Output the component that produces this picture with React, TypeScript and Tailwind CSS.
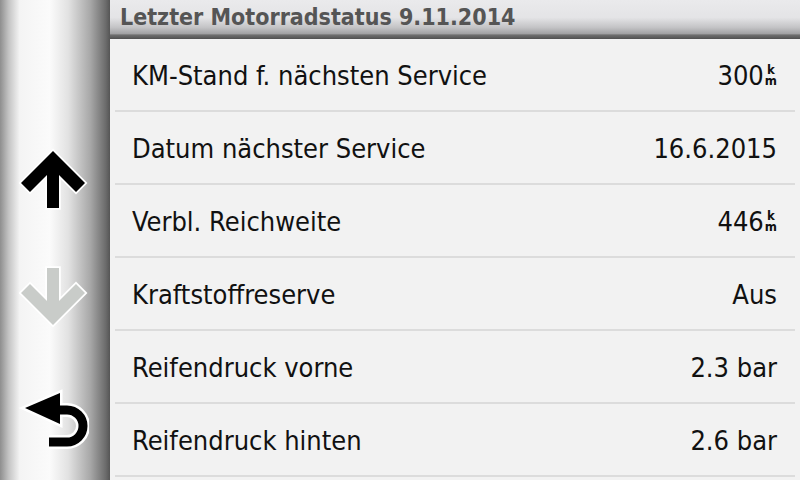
import React from "react";

const rows: { label: string; value: string; unit?: boolean }[] = [
  { label: "KM-Stand f. nächsten Service", value: "300", unit: true },
  { label: "Datum nächster Service", value: "16.6.2015" },
  { label: "Verbl. Reichweite", value: "446", unit: true },
  { label: "Kraftstoffreserve", value: "Aus" },
  { label: "Reifendruck vorne", value: "2.3 bar" },
  { label: "Reifendruck hinten", value: "2.6 bar" },
];

const font = { fontFamily: "'DejaVu Sans Condensed', 'DejaVu Sans', sans-serif" };

function Arrow({ color, down }: { color: string; down?: boolean }) {
  return (
    <svg width="72" height="66" viewBox="-4 -4 72 66" className={down ? "rotate-180" : ""}>
      <polygon
        points="32,0 64,32 55,41 38,24 38,57 26,57 26,24 9,41 0,32"
        fill={color}
        stroke="#ffffff"
        strokeWidth="3.5"
        strokeLinejoin="miter"
        paintOrder="stroke"
      />
    </svg>
  );
}

function BackArrow() {
  return (
    <svg width="72" height="66" viewBox="20 385 72 66">
      <g stroke="#ffffff" strokeWidth="14" fill="none" strokeLinejoin="miter">
        <path d="M58 409 H70 A16 16 0 0 1 70 441 H52" />
        <polygon points="28,407 63,392 63,423" fill="#ffffff" strokeWidth="5" />
      </g>
      <path d="M58 409 H70 A16 16 0 0 1 70 441 H52" stroke="#000" strokeWidth="9" fill="none" />
      <polygon points="28,407 63,392 63,423" fill="#000" />
    </svg>
  );
}

function KmUnit() {
  return (
    <span className="ml-[1px] inline-flex -translate-y-[2px] flex-col items-center text-[13px] font-bold leading-[11px]">
      <span>k</span>
      <span>m</span>
    </span>
  );
}

export default function App() {
  return (
    <div className="flex h-[480px] w-[800px] overflow-hidden bg-[#f2f2f2]" style={font}>
      <div className="flex w-[110px] shrink-0 flex-col items-center bg-[linear-gradient(to_right,#8e8e8e_0%,#c4c4c4_8%,#f4f4f4_18%,#fbfbfb_45%,#e2e2e2_62%,#a8a8a8_82%,#6c6c6c_96%,#555555_100%)]">
        <div className="mt-[147px] pr-[4px]">
          <Arrow color="#000000" />
        </div>
        <div className="mt-[50px] pr-[4px]">
          <Arrow color="#c9ccc9" down />
        </div>
        <div className="mt-[57px] pr-[4px]">
          <BackArrow />
        </div>
      </div>
      <div className="flex min-w-0 flex-1 flex-col">
        <div className="flex h-[39px] shrink-0 items-center bg-[linear-gradient(to_bottom,#eaeaec_0%,#e4e4e6_45%,#c4c4c6_70%,#a2a2a4_86%,#6e6e6e_90%,#505050_100%)] pb-[4px] pl-[10px]">
          <span className="text-[23px] font-bold text-[#555555]">
            Letzter Motorradstatus 9.11.2014
          </span>
        </div>
        {rows.map((r) => (
          <div key={r.label} className="flex h-[73px] shrink-0 flex-col">
            <div className="flex h-[71px] items-center justify-between pl-[22px] pr-[23px] pt-[4px] text-[27px] text-[#111111]">
              <span>{r.label}</span>
              <span className="flex items-center">
                {r.value}
                {r.unit && <KmUnit />}
              </span>
            </div>
            <div className="mx-[5px] h-[2px] bg-[#dcdcdc]" />
          </div>
        ))}
      </div>
    </div>
  );
}
